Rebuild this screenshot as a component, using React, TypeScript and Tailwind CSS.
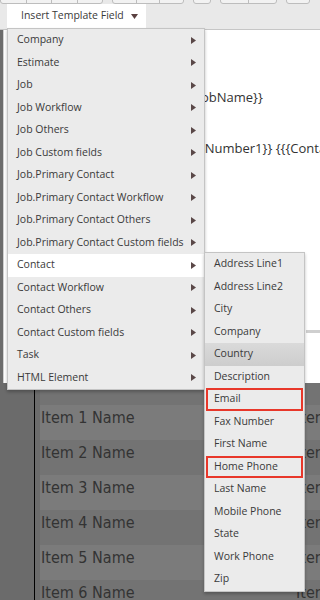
const mainItems = [
  "Company",
  "Estimate",
  "Job",
  "Job Workflow",
  "Job Others",
  "Job Custom fields",
  "Job.Primary Contact",
  "Job.Primary Contact Workflow",
  "Job.Primary Contact Others",
  "Job.Primary Contact Custom fields",
  "Contact",
  "Contact Workflow",
  "Contact Others",
  "Contact Custom fields",
  "Task",
  "HTML Element",
];

const contactFields = [
  "Address Line1",
  "Address Line2",
  "City",
  "Company",
  "Country",
  "Description",
  "Email",
  "Fax Number",
  "First Name",
  "Home Phone",
  "Last Name",
  "Mobile Phone",
  "State",
  "Work Phone",
  "Zip",
];

const marked = ["Email", "Home Phone"];

const rows = ["", "Item 1 Name", "Item 2 Name", "Item 3 Name", "Item 4 Name", "Item 5 Name", "Item 6 Name"];

function Caret() {
  return (
    <svg width="5" height="7" viewBox="0 0 5 7" className="shrink-0">
      <polygon points="0,0 5,3.5 0,7" fill="#5a4848" />
    </svg>
  );
}

function ToolbarStubs() {
  // only the bottom edges of the formatting buttons peek out at the top
  const groups = [
    { x: "w-[103px]", parts: 4 },
    { x: "w-[72px]", parts: 3 },
    { x: "w-[18px]", parts: 1 },
    { x: "w-[57px]", parts: 2 },
    { x: "w-[24px]", parts: 1 },
  ];
  return (
    <div className="flex h-[4px] items-end gap-[9px] overflow-hidden">
      {groups.map((g, i) => (
        <div key={i} className={`flex h-[10px] ${g.x} rounded-b-[3px] border border-[#bdbdbd] bg-[#f2f2f2]`}>
          {Array.from({ length: g.parts }).map((_, j) => (
            <div key={j} className="flex-1 border-r border-[#bdbdbd] last:border-r-0" />
          ))}
        </div>
      ))}
    </div>
  );
}

export default function App() {
  return (
    <div className="relative h-[600px] w-[320px] overflow-hidden bg-[#6c6c6c] font-['Open_Sans',sans-serif]">
      {/* toolbar */}
      <div className="h-[30px] border-b border-[#c6c6c6] bg-[#e9e9e9]">
        <ToolbarStubs />
        <div className="ml-[7px] flex h-[24px] w-[139px] items-center gap-[7px] bg-white pl-[14px]">
          <span className="text-[10.5px] text-[#3a3a3a]">Insert Template Field</span>
          <svg width="7" height="5" viewBox="0 0 7 5">
            <polygon points="0,0 7,0 3.5,5" fill="#5a4040" />
          </svg>
        </div>
      </div>

      {/* editor */}
      <div className="ml-[3px] h-[353px] overflow-hidden border-l border-[#cfcfcf] bg-white text-[13px] text-[#333]">
        <div className="whitespace-nowrap pl-[161px] pt-[57px] leading-[20px]">{"{{Job.JobName}}"}</div>
        <div className="mt-[31px] whitespace-nowrap pl-[102px] leading-[20px]">
          {"{{Contact.PhoneNumber1}} {{{Contact.Email}}}"}
        </div>
        <div className="ml-[302px] mt-[172px] h-[3px] bg-[#cfcfcf]" />
      </div>

      {/* list below the editor */}
      <div className="flex">
        <div className="w-[35px] shrink-0 border-r border-black bg-[#6b6b6b]" />
        <div className="ml-[5px] flex-1 overflow-hidden font-['Liberation_Sans_Narrow','DejaVu_Sans_Condensed',sans-serif] text-[16px] text-[#333]">
          {rows.map((r, i) => (
            <div
              key={i}
              className={`flex ${i === 0 ? "h-[22px]" : "h-[35px]"} pt-[5px] leading-[16px] ${
                i % 2 === 0 ? "bg-[#737373]" : "bg-[#7b7b7b]"
              }`}
            >
              <span className="w-[256px] shrink-0 whitespace-nowrap pl-[1px]">{r}</span>
              <span className="shrink-0 whitespace-nowrap">{r}</span>
            </div>
          ))}
        </div>
      </div>

      {/* template field menu */}
      <div className="absolute left-[7px] top-[28px] w-[198px] border border-[#c4c4c4] bg-[#ebebeb] shadow-[0_2px_3px_rgba(0,0,0,0.25)]">
        {mainItems.map((item) => (
          <div
            key={item}
            className={`flex h-[22.5px] items-center justify-between pl-[9px] pr-[8px] text-[10.5px] text-[#3a3a3a] ${
              item === "Contact" ? "bg-white" : ""
            }`}
          >
            <span className="whitespace-nowrap">{item}</span>
            <Caret />
          </div>
        ))}
      </div>

      {/* contact submenu */}
      <div className="absolute left-[204px] top-[252px] w-[101px] border border-[#c4c4c4] bg-[#ebebeb] shadow-[0_2px_3px_rgba(0,0,0,0.25)]">
        {contactFields.map((f) => (
          <div key={f} className={`h-[22.5px] ${f === "Country" ? "bg-gradient-to-b from-[#dadada] to-[#cdcdcd]" : ""}`}>
            <div
              className={`flex h-full items-center text-[10.5px] text-[#3a3a3a] ${
                marked.includes(f)
                  ? "mx-[1px] h-[21px] pl-[8px] shadow-[inset_0_0_0_2px_#e8372a]"
                  : "pl-[9px]"
              }`}
            >
              <span className="whitespace-nowrap">{f}</span>
            </div>
          </div>
        ))}
      </div>
    </div>
  );
}
